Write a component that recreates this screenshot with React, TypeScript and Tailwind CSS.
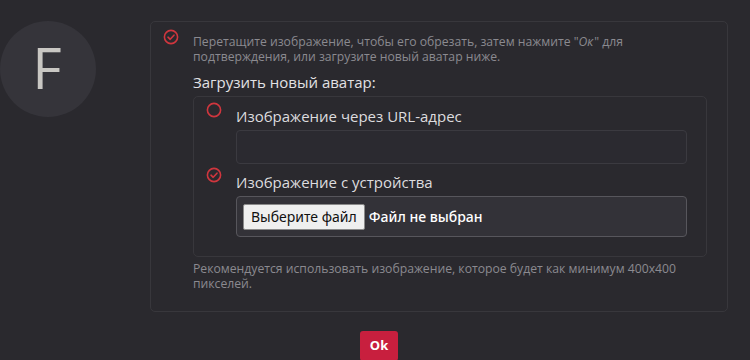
import React from 'react';

const CheckedIcon = () => (
  <svg width="16" height="16" viewBox="0 0 16 16" fill="none" className="shrink-0">
    <circle cx="8" cy="8" r="6.6" stroke="#d0363e" strokeWidth="1.6" />
    <path d="M5 8.2 L7.2 10.3 L11 6.2" stroke="#d0363e" strokeWidth="1.6" strokeLinecap="round" strokeLinejoin="round" />
  </svg>
);

const EmptyIcon = () => (
  <svg width="16" height="16" viewBox="0 0 16 16" fill="none" className="shrink-0">
    <circle cx="8" cy="8" r="6.6" stroke="#d0363e" strokeWidth="1.6" />
  </svg>
);

const App = () => {
  return (
    <div className="min-h-[360px] w-[750px] overflow-hidden bg-[#2a292e] font-['Open_Sans',sans-serif]">
      <div className="flex items-start pt-[21px]">
        {/* avatar */}
        <div className="flex h-24 w-24 shrink-0 items-center justify-center rounded-full bg-[#35343a]">
          <span className="pb-[3px] pr-[2px] text-[57px] font-normal leading-none text-[#c9c7c3]">F</span>
        </div>

        {/* crop card */}
        <div className="ml-[54px] w-[578px] rounded-[5px] border border-[#38373c] pb-[20px]">
          <div className="flex items-start pt-[7px] pl-[12px] pr-[20px]">
            <CheckedIcon />
            <div className="ml-[14px] mt-[5px] flex-1">
              <p className="text-[12.2px] leading-[15px] text-[#8b8a90]">
                <span className="block">
                  Перетащите изображение, чтобы его обрезать, затем нажмите "
                  <i className="inline-block pr-[1px] leading-[15px]">Ок</i>" для
                </span>
                <span className="block">подтверждения, или загрузите новый аватар ниже.</span>
              </p>
              <h3 className="mt-[8px] text-[15px] leading-[20px] text-[#e2e1e4]">Загрузить новый аватар:</h3>

              <div className="mt-[4px] rounded-[5px] border border-[#38373c] pt-[5px] pb-[19px] pl-[12px] pr-[19px]">
                <div className="flex items-start">
                  <EmptyIcon />
                  <div className="ml-[14px] flex-1">
                    <div className="mt-[4px] text-[15px] leading-[20px] text-[#dddcdf]">Изображение через URL-адрес</div>
                    <div className="mt-[4px] h-[34px] rounded-[4px] border border-[#3b3a40] bg-[#2b2a30]" />
                  </div>
                </div>

                <div className="mt-[3px] flex items-start">
                  <CheckedIcon />
                  <div className="ml-[14px] flex-1">
                    <div className="mt-[5px] text-[15px] leading-[20px] text-[#dddcdf]">Изображение с устройства</div>
                    <div className="mt-[4px] flex h-[41px] items-center rounded-[4px] border border-[#57565c] bg-[#333238] pl-[6px]">
                      <span className="flex h-[26px] items-center rounded-[2px] border border-[#8a8a8a] bg-[#efefef] px-[7px] font-['Noto_Sans',sans-serif] text-[14px] text-[#111]">
                        Выберите файл
                      </span>
                      <span className="ml-[4px] font-['Noto_Sans',sans-serif] text-[14px] font-medium text-white">Файл не выбран</span>
                    </div>
                  </div>
                </div>
              </div>

              <p className="mt-[4px] text-[12.2px] leading-[15px] text-[#8b8a90]">
                Рекомендуется использовать изображение, которое будет как минимум 400x400 пикселей.
              </p>
            </div>
          </div>
        </div>
      </div>

      <div className="mt-[19px] flex justify-center pl-[8px]">
        <button className="h-[30px] w-[38px] rounded-[3px] bg-[#c81f3e] text-[13px] font-bold text-white">Ok</button>
      </div>
    </div>
  );
};

export default App;
